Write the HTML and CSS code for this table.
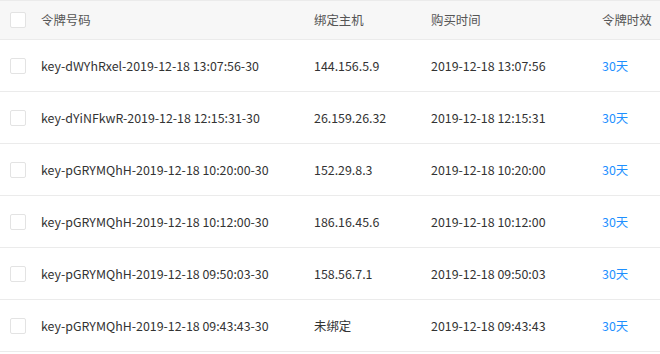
FILE: index.html
```html
<!DOCTYPE html>
<html lang="zh">
<head>
<meta charset="utf-8">
<link rel="stylesheet" href="styles.css">
</head>
<body>
<div class="table">
  <div class="row head">
    <div class="cell check"><span class="box"></span></div>
    <div class="cell">令牌号码</div>
    <div class="cell">绑定主机</div>
    <div class="cell">购买时间</div>
    <div class="cell">令牌时效</div>
  </div>
  <div class="row">
    <div class="cell check"><span class="box"></span></div>
    <div class="cell">key-dWYhRxel-2019-12-18 13:07:56-30</div>
    <div class="cell">144.156.5.9</div>
    <div class="cell">2019-12-18 13:07:56</div>
    <div class="cell link">30天</div>
  </div>
  <div class="row">
    <div class="cell check"><span class="box"></span></div>
    <div class="cell">key-dYiNFkwR-2019-12-18 12:15:31-30</div>
    <div class="cell">26.159.26.32</div>
    <div class="cell">2019-12-18 12:15:31</div>
    <div class="cell link">30天</div>
  </div>
  <div class="row">
    <div class="cell check"><span class="box"></span></div>
    <div class="cell">key-pGRYMQhH-2019-12-18 10:20:00-30</div>
    <div class="cell">152.29.8.3</div>
    <div class="cell">2019-12-18 10:20:00</div>
    <div class="cell link">30天</div>
  </div>
  <div class="row">
    <div class="cell check"><span class="box"></span></div>
    <div class="cell">key-pGRYMQhH-2019-12-18 10:12:00-30</div>
    <div class="cell">186.16.45.6</div>
    <div class="cell">2019-12-18 10:12:00</div>
    <div class="cell link">30天</div>
  </div>
  <div class="row">
    <div class="cell check"><span class="box"></span></div>
    <div class="cell">key-pGRYMQhH-2019-12-18 09:50:03-30</div>
    <div class="cell">158.56.7.1</div>
    <div class="cell">2019-12-18 09:50:03</div>
    <div class="cell link">30天</div>
  </div>
  <div class="row">
    <div class="cell check"><span class="box"></span></div>
    <div class="cell">key-pGRYMQhH-2019-12-18 09:43:43-30</div>
    <div class="cell">未绑定</div>
    <div class="cell">2019-12-18 09:43:43</div>
    <div class="cell link">30天</div>
  </div>
</div>
</body>
</html>
```
FILE: styles.css
```css
html, body {
  margin: 0;
  padding: 0;
  background: #fff;
}
body {
  font-family: "Noto Sans CJK SC", "Noto Sans", sans-serif;
  font-size: 12.4px;
  color: #333;
}
.table {
  width: 660px;
  border-top: 1px solid #ebebeb;
}
.row {
  display: grid;
  grid-template-columns: 41px 273px 117px 171px 1fr;
  align-items: center;
  height: 51px;
  border-bottom: 1px solid #ebebeb;
}
.row.head {
  height: 38px;
  background: #f7f7f7;
  color: #555;
}
.cell {
  white-space: nowrap;
}
.check {
  padding-left: 10px;
  display: flex;
  align-items: center;
}
.box {
  display: block;
  width: 14px;
  height: 14px;
  border: 1px solid #e3e3e3;
  border-radius: 2px;
  background: #fff;
}
.link {
  color: #1e90ff;
}
```
